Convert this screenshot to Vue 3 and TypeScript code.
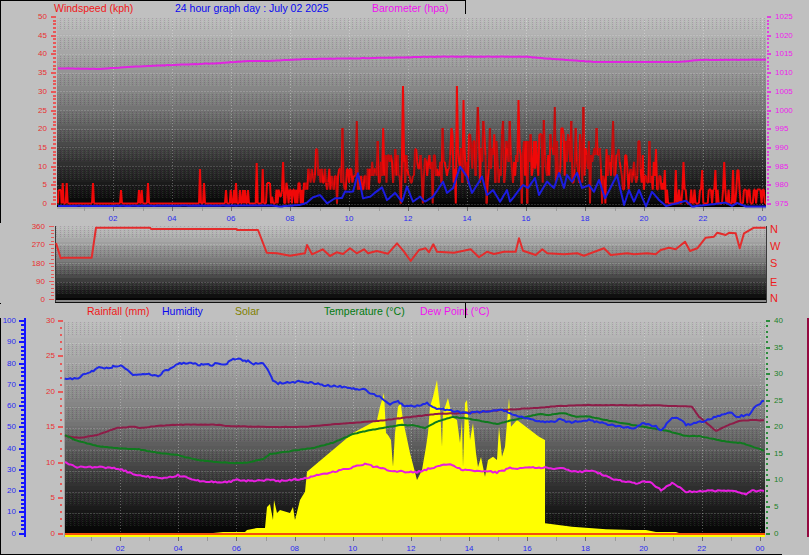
<script setup lang="ts">
type Pt = [number, number]
interface Box { x: number; y: number; w: number; h: number; fill: string }
interface Label { x: number; y: number; text: string; fill: string; anchor: string; size: number }
interface Stroke { d: string; color: string; width: number }
interface Panel {
  name: string
  legendClass: string
  legends: { text: string; cls: string }[]
  top: number
  height: number
  bands: Box[]
  dither: Box[]
  grid: Box[]
  area: string
  under: Stroke[]
  marks: Box[]
  labels: Label[]
}

function rng(seed: number) {
  let s = seed
  return () => {
    s = (s * 1664525 + 1013904223) % 4294967296
    return s / 4294967296
  }
}

const stops: Pt[] = [[0, 0xbc], [0.2, 0xa2], [0.45, 0x78], [0.6, 0x56], [0.75, 0x32], [0.9, 0x14], [1, 0x00]]
function grayAt(t: number): string {
  for (let i = 1; i < stops.length; i++) {
    if (t <= stops[i][0]) {
      const f = (t - stops[i - 1][0]) / (stops[i][0] - stops[i - 1][0])
      const v = Math.round(stops[i - 1][1] + f * (stops[i][1] - stops[i - 1][1]))
      return `rgb(${v},${v},${v})`
    }
  }
  return '#000'
}
function bands(x0: number, x1: number, y0: number, y1: number): Box[] {
  const out: Box[] = []
  for (let y = y0; y < y1; y += 4) {
    out.push({ x: x0, y, w: x1 - x0, h: Math.min(4, y1 - y), fill: grayAt((y - y0) / (y1 - y0)) })
  }
  return out
}
function dither(x0: number, x1: number, start: number, end: number, step: number): Box[] {
  const out: Box[] = []
  for (let y = start; y < end - 3; y += step) {
    out.push({ x: x0, y: Math.round(y), w: x1 - x0, h: Math.round(Math.min(step * 0.62, end - y)), fill: 'url(#dots)' })
  }
  return out
}
function hLines(x0: number, x1: number, ys: number[]): Box[] {
  return ys.map((y) => ({ x: x0, y: Math.round(y), w: x1 - x0, h: 1, fill: 'url(#dashH)' }))
}
function vLines(xs: number[], y0: number, y1: number): Box[] {
  return xs.map((x) => ({ x: Math.round(x), y: y0, w: 1, h: y1 - y0, fill: 'url(#dashV)' }))
}
function line(pts: Pt[]): string {
  return pts.map((p, i) => `${i ? 'L' : 'M'}${p[0].toFixed(1)} ${p[1].toFixed(1)}`).join('')
}
function noisy(pts: Pt[], amp: number, seed: number): string {
  const r = rng(seed)
  const out: Pt[] = []
  for (let i = 1; i < pts.length; i++) {
    const [ax, ay] = pts[i - 1]
    const [bx, by] = pts[i]
    const n = Math.max(1, Math.round((bx - ax) / 2))
    for (let k = 0; k < n; k++) {
      const f = k / n
      out.push([ax + (bx - ax) * f, ay + (by - ay) * f + (r() - 0.5) * amp])
    }
  }
  out.push(pts[pts.length - 1])
  return line(out)
}
function ticks(x: number, majorW: number, minorW: number, top: number, bottom: number, n: number, every: number, fill: string, h = 1): Box[] {
  const out: Box[] = []
  for (let i = 0; i <= n; i++) {
    const major = i % every === 0
    const y = top + ((bottom - top) * i) / n
    out.push({ x, y: Math.round(y - 0.5), w: major ? majorW : minorW, h, fill })
  }
  return out
}
function yLabels(x: number, top: number, bottom: number, values: string[], fill: string, anchor: string): Label[] {
  return values.map((text, i) => ({
    x,
    y: top + ((bottom - top) * i) / (values.length - 1),
    text,
    fill,
    anchor,
    size: 8
  }))
}
const hours = ['02', '04', '06', '08', '10', '12', '14', '16', '18', '20', '22', '00']
function xLabels(x0: number, per: number, y: number): Label[] {
  return hours.map((text, i) => ({ x: x0 + per * (i + 1) * 2, y, text, fill: '#2a2af0', anchor: 'middle', size: 8 }))
}
function xTicks(x0: number, per: number, y: number): Box[] {
  const out: Box[] = []
  for (let h = 1; h <= 24; h++) {
    out.push({ x: Math.round(x0 + per * h), y, w: 1, h: 4, fill: h % 2 ? '#9a9a9a' : '#6c6c6c' })
  }
  return out
}

/* ---------- wind panel ---------- */
const W_BASE = 203.5
const W_STEP = 6.93
const spikes: Pt[] = [
  [62.7, 183], [66.7, 183], [93, 183], [121, 190], [139, 190], [141.7, 190], [148, 183], [200, 169],
  [204, 183], [226, 190], [230.7, 190], [234, 190], [236, 183], [240, 190], [243, 190], [245, 190],
  [248, 190], [256.7, 163], [262.7, 169]
]
const peaks: Pt[] = [
  [402.7, 86], [456.7, 86], [464, 100], [478, 107], [519, 100], [342.7, 128], [356.7, 121], [383, 128],
  [378, 141], [316.7, 149], [282.7, 162], [483, 121], [503, 121], [510, 121], [451.7, 128], [442.7, 128],
  [490, 128], [473, 141], [415.7, 149], [425, 158], [395, 149], [555, 107], [583, 107], [544, 120],
  [562, 128], [571, 121], [576, 128], [613, 121], [597, 128], [607, 149], [619, 149], [639, 141],
  [649, 141], [656, 149], [665, 170], [676, 170], [684, 162], [702, 170], [715, 170], [724, 162],
  [733, 170], [738, 170], [746, 190]
]
function windPaths(): Stroke[] {
  const r = rng(77)
  const pts: Pt[] = [[58, W_BASE], [58.5, 190], [61, 190], [61.5, W_BASE]]
  for (const [x, y] of spikes) pts.push([x - 1, W_BASE], [x, y], [x + 1, W_BASE])
  pts.push([266, W_BASE], [267, 183], [270, 183])
  for (let x = 271; x < 766; x += 1.1) {
    let low = 2
    let high = 5
    let zero = 0.035
    if (x < 305) { low = 0; high = 3; zero = 0.3 }
    else if (x < 370) { low = 2; high = 5 }
    else if (x < 450) { low = 3; high = 7 }
    else if (x < 600) { low = 3; high = 10 }
    else if (x < 665) { low = 2; high = 7; zero = 0.1 }
    else { low = 0; high = 2; zero = 0.35 }
    let q = low + Math.floor(Math.pow(r(), 1.15) * (high - low + 1))
    if (r() < zero) q = 0
    if (x >= 665 && q === 1) q = 2
    let y = W_BASE - q * W_STEP
    for (const [px, py] of peaks) if (Math.abs(px - x) < 0.6) y = py
    pts.push([x, y])
  }
  pts.sort((a, b) => a[0] - b[0])
  pts.push([766, W_BASE])
  let bright = ''
  let dark = ''
  for (let i = 1; i < pts.length; i++) {
    const seg = `M${pts[i - 1][0].toFixed(1)} ${pts[i - 1][1].toFixed(1)}L${pts[i][0].toFixed(1)} ${pts[i][1].toFixed(1)}`
    if (pts[i][0] > 300 && pts[i][0] < 660 && r() < 0.4) dark += seg
    else bright += seg
  }
  return [
    { d: bright, color: '#f00808', width: 2 },
    { d: dark, color: '#c40c0c', width: 2 }
  ]
}
const windBlue: Pt[] = [
  [58, 206], [270, 205.5], [280, 206.5], [300, 205], [307, 202.7], [313, 197.3], [320, 195], [327, 203.3], [335, 198.3],
  [342, 198], [345, 191.7], [353, 191.7], [358, 173.3], [363, 198.3], [370, 196.7], [382, 187.3], [387, 200],
  [395, 193], [402, 201.7], [407, 186.7], [413, 201.7], [420, 196.7], [425, 201.7], [433, 196.7], [443, 181.7],
  [447, 193], [453, 188], [460, 166.7], [467, 176.7], [472, 193], [482, 176.7], [487, 195], [493, 190],
  [500, 201.7], [507, 190], [510, 201.7], [523, 185], [528, 188], [535, 178], [539, 195], [547, 181.7],
  [554, 188], [559, 173], [564, 188], [567, 175], [572, 181.7], [577, 173], [582, 188], [589, 185], [594, 191.7],
  [599, 180], [605, 198.3], [611, 186.7], [617, 175], [624, 205], [629, 190], [634, 201.7], [639, 190],
  [646, 206.5], [652, 191.7], [659, 200], [666, 206], [686, 200.7], [692, 206.5], [726, 202.7], [732, 206],
  [737, 203], [746, 206.5], [766, 206.5]
]
const baro: Pt[] = [
  [58, 68.3], [100, 69], [113, 68], [133, 66.7], [173, 65], [217, 63.3], [248, 61], [270, 61], [303, 59],
  [360, 58.3], [437, 56.7], [527, 56.7], [540, 58], [572, 60.3], [596, 62], [679, 62], [699, 60], [766, 59.7]
]
const windYs = Array.from({ length: 10 }, (_, i) => 35.2 + 18.7 * i)
const windHour = (h: number) => 54 + 29.5 * h
const windPanel: Panel = {
  name: 'wind',
  legendClass: 'legend-wind',
  legends: [
    { text: 'Windspeed (kph)', cls: 'red' },
    { text: '24 hour graph day : July 02 2025', cls: 'blue' },
    { text: 'Barometer (hpa)', cls: 'magenta' }
  ],
  top: 14,
  height: 208,
  bands: bands(57, 766, 18, 207),
  dither: dither(57, 766, 18, 207, 18.7),
  grid: [...hLines(57, 766, windYs), ...vLines(hours.map((_, i) => windHour((i + 1) * 2)), 18, 207)],
  area: '',
  under: [
    ...windPaths(),
    { d: noisy(windBlue, 0.3, 5), color: '#1c1ce0', width: 2 },
    { d: noisy(baro, 0.3, 6), color: '#e024e0', width: 2 }
  ],
  marks: [
    { x: 0, y: 14, w: 1, h: 209, fill: '#000' },
    { x: 57, y: 207, w: 709, h: 2, fill: '#a8a8a8' },
    ...ticks(51, 5, 3, 16.5, 203.5, 50, 5, '#e85858', 2).map((b) => (b.w === 3 ? { ...b, x: 53 } : b)),
    ...ticks(767, 4, 2, 16.5, 203.5, 50, 5, '#e040e0', 2),
    ...xTicks(54, 29.5, 207)
  ],
  labels: [
    ...yLabels(47, 16.5, 203.5, ['50', '45', '40', '35', '30', '25', '20', '15', '10', '5', '0'], '#e83030', 'end'),
    ...yLabels(775, 16.5, 203.5, ['1025', '1020', '1015', '1010', '1005', '1000', '995', '990', '985', '980', '975'], '#ee20ee', 'start'),
    ...xLabels(54, 29.5, 218)
  ]
}

/* ---------- direction panel ---------- */
const dir: Pt[] = [
  [56, 243], [60.7, 258.3], [63, 257.7], [91.7, 257.7], [96, 227.7], [150, 227.7], [151, 229], [236.7, 229], [237, 230],
  [258, 230], [266.7, 252.7], [277, 253.3], [290, 255.7], [305, 253.3], [307, 245], [312, 254.3], [322.7, 249.3],
  [330, 256], [336.7, 252.3], [343, 254], [350, 248.3], [356.7, 253.3], [364, 249.3], [368, 253.3], [376.7, 251],
  [388, 253.7], [397, 243.3], [404, 251.7], [410.7, 261], [419, 250], [425.7, 248.3], [429, 252.3], [433.3, 244.3],
  [437, 251.7], [454, 252.7], [470.7, 249.3], [479, 257.3], [487, 251.7], [494, 254], [504, 251.7], [515.7, 251.7],
  [519, 238.3], [523, 250.7], [535.7, 255], [542.3, 249.3], [547.3, 253.3], [564, 254.3], [577.3, 253.3], [584, 255.7],
  [604, 248.3], [610.7, 255], [627.3, 253.3], [634, 254.3], [647.3, 253.3], [655.7, 254.3], [660.7, 250], [669, 247.7],
  [675.7, 249.3], [685, 241.7], [690, 251], [697.3, 248.3], [705.7, 237.7], [714, 236.7], [717.3, 232.7], [725.7, 235],
  [729, 232.7], [735.7, 233.3], [739.7, 248.3], [744, 233.3], [754, 227.7], [765.7, 227.7]
]
const dirPanel: Panel = {
  name: 'dir',
  legendClass: '',
  legends: [],
  top: 222,
  height: 82,
  bands: bands(56, 767, 226, 300),
  dither: dither(56, 767, 226, 300, 18.7),
  grid: [...hLines(56, 767, [244.3, 263, 282])],
  area: '',
  under: [{ d: line(dir), color: '#e42c2c', width: 2 }],
  marks: [
    { x: 55, y: 226, w: 1, h: 77, fill: '#3a3a3a' },
    { x: 56, y: 300, w: 711, h: 2, fill: '#8c8c8c' },
    { x: 55, y: 302, w: 712, h: 1, fill: '#111' },
    { x: 766, y: 226, w: 1, h: 77, fill: '#3a3a3a' },
    { x: 0, y: 222, w: 1, h: 1, fill: '#000' },
    { x: 0, y: 303, w: 1, h: 1, fill: '#000' },
    ...ticks(49, 5, 3, 226.7, 299.5, 20, 5, '#e85858', 1).map((b) => (b.w === 3 ? { ...b, x: 51 } : b))
  ],
  labels: [
    ...yLabels(45, 226.7, 299.5, ['360', '270', '180', '90', '0'], '#e83030', 'end'),
    ...['N', 'W', 'S', 'E', 'N'].map((text, i) => ({
      x: 770,
      y: [229, 246, 263, 282, 298][i],
      text,
      fill: '#ee1c1c',
      anchor: 'start',
      size: 11
    }))
  ]
}

/* ---------- weather panel ---------- */
const humidity: Pt[] = [
  [64.7, 379], [78, 378.7], [83, 375], [90, 373], [97, 368], [112, 368], [113, 366], [123, 366], [133, 374.7], [147, 374],
  [160, 376], [163, 371.7], [172, 368], [178, 363.7], [195, 363.7], [198, 365.7], [203, 364], [212, 365.7], [215, 363.7],
  [227, 363.7], [230, 361], [233, 359], [240, 359], [243, 361], [248, 361.3], [252, 363.7], [263, 363.7], [267, 368],
  [270, 374], [273, 380], [278, 384], [280, 382.7], [293, 382.7], [297, 381], [310, 382.7], [330, 386], [350, 387.3],
  [357, 390], [363, 388], [370, 393], [380, 397], [390, 404], [398, 401.7], [405, 406.7], [417, 406], [427, 402.7],
  [433, 408], [443, 409], [457, 411.7], [470, 413], [483, 411.7], [500, 409], [510, 413], [520, 416.7], [539, 420.7],
  [549, 422.7], [562, 419], [566, 422.7], [589, 420], [602, 423], [616, 426], [636, 428], [642, 423], [656, 426],
  [661, 430.7], [672, 417], [681, 420], [686, 425], [706, 420.7], [716, 417], [732, 412.7], [736, 416.7], [749, 415],
  [756, 406], [764, 400.7]
]
const crimson: Pt[] = [
  [65, 436], [80, 438], [97, 435], [117, 428], [133, 426.7], [140, 428], [157, 426], [177, 424.7], [217, 424.7], [227, 426],
  [270, 427], [303, 427], [337, 424], [377, 421], [410, 417], [437, 414], [470, 412.7], [503, 410], [539, 407.7],
  [559, 406], [586, 405], [656, 405.3], [692, 406.7], [699, 416.7], [716, 431], [726, 426], [739, 421], [752, 420], [764, 420.3]
]
const green: Pt[] = [
  [65, 435.3], [75, 440], [97, 446], [117, 448.3], [137, 449], [153, 452], [177, 455], [197, 460], [217, 462], [233, 463],
  [248, 462.7], [263, 459], [270, 454], [293, 450.7], [313, 448], [333, 442.7], [353, 434], [367, 430.7], [383, 428],
  [400, 425], [413, 425.3], [425, 428], [437, 421.7], [453, 416.7], [470, 419], [497, 424], [510, 420.7], [527, 416.7],
  [539, 414], [547, 415], [564, 413], [576, 417], [586, 416], [609, 420.7], [639, 426], [666, 430.7], [686, 436],
  [699, 436], [726, 441.7], [742, 443], [764, 450.7]
]
const dew: Pt[] = [
  [65, 462.3], [75, 467], [100, 467], [120, 469], [133, 474], [150, 477], [160, 478.7], [178, 475.3], [200, 481], [227, 482.3],
  [237, 480], [250, 481], [270, 480], [280, 481], [303, 478.7], [337, 471], [365, 464.3], [393, 471], [417, 472.3],
  [430, 468.3], [450, 464], [463, 470], [483, 470.7], [497, 472.3], [510, 468.3], [539, 467.7], [562, 468.3], [576, 472],
  [592, 470.7], [616, 480], [636, 483.3], [644, 481], [652, 483.3], [661, 490], [672, 483.3], [686, 491.7], [712, 490.7],
  [732, 490.7], [746, 494], [752, 490.7], [764, 491]
]
const solar: Pt[] = [
  [208, 535], [213, 533], [223, 532], [245, 532], [247, 530], [257, 528], [265, 528], [267, 507], [270, 504], [273, 520], [274, 500],
  [277, 513], [280, 510], [290, 513], [293, 507], [295, 520], [300, 500], [305, 491.7], [307, 471.7], [353, 433], [377, 420],
  [380, 406.7], [384, 393], [386, 433], [388, 435], [391, 440], [393, 466.7], [395, 433], [398, 406.7], [400.7, 403], [403, 420],
  [410, 453], [417, 480], [422, 470], [426, 446.7], [428, 433], [430, 406.7], [433, 396.7], [437, 380], [438, 390], [440, 406.7],
  [442, 446.7], [443, 413], [448, 398], [452, 416.7], [457, 420], [460, 443], [462, 420], [463, 466.7], [465, 403], [467, 400],
  [470, 440], [473, 423], [476, 453], [478, 467], [481, 457], [485, 476.7], [488, 460], [493, 456.7], [497, 460], [499, 426.7],
  [502, 456.7], [505, 446.7], [509, 398], [511, 426.7], [517, 420], [539, 436.7], [545, 440], [545, 523.3], [572, 526.7],
  [606, 529.3], [632, 530], [646, 530], [656, 532], [676, 532], [682, 534], [700, 535]
]
const hour3 = (h: number) => 62 + 29.08 * h
const weatherPanel: Panel = {
  name: 'weather',
  legendClass: 'legend-rain',
  legends: [
    { text: 'Rainfall (mm)', cls: 'red' },
    { text: 'Humidity', cls: 'blue' },
    { text: 'Solar', cls: 'olive' },
    { text: 'Temperature (°C)', cls: 'green' },
    { text: 'Dew Point (°C)', cls: 'magenta' }
  ],
  top: 318,
  height: 237,
  bands: bands(64, 765, 322, 535),
  dither: dither(64, 765, 322, 535, 21.2),
  grid: [
    ...hLines(64, 765, [342.5, 363, 385, 406.8, 428, 449.5, 471, 492, 513]),
    ...vLines(hours.map((_, i) => hour3((i + 1) * 2)), 322, 537)
  ],
  area: `${line(solar)}Z`,
  under: [
    { d: noisy(crimson, 0.4, 11), color: '#8e1c48', width: 2 },
    { d: noisy(green, 0.5, 12), color: '#0f7a1e', width: 2 },
    { d: noisy(dew, 1.6, 13), color: '#e81ee0', width: 2 },
    { d: noisy(humidity, 2, 14), color: '#1e28e6', width: 2 }
  ],
  marks: [
    { x: 0, y: 318, w: 1, h: 237, fill: '#000' },
    { x: 64, y: 533, w: 701, h: 2, fill: '#f4500a' },
    { x: 64, y: 535, w: 701, h: 2, fill: '#ffff00' },
    { x: 0, y: 554, w: 782, h: 1, fill: '#000' },
    { x: 24, y: 318, w: 2, h: 219, fill: '#1414ff' },
    { x: 807, y: 318, w: 2, h: 219, fill: '#940a40' },
    { x: 64, y: 322, w: 1, h: 215, fill: '#a0a0a0' },
    ...ticks(19, 5, 3, 320.5, 533, 50, 5, '#1414ff', 2).map((b) => (b.w === 3 ? { ...b, x: 21 } : b)),
    ...ticks(58, 5, 2, 320.5, 533, 30, 5, '#e85858', 2).map((b) => (b.w === 2 ? { ...b, x: 60 } : b)),
    ...ticks(766, 4, 2, 320.5, 533, 40, 5, '#2c8c3c', 2),
    ...xTicks(62, 29.08, 537)
  ],
  labels: [
    ...yLabels(16, 320.5, 533, ['100', '90', '80', '70', '60', '50', '40', '30', '20', '10', '0'], '#2a2af0', 'end'),
    ...yLabels(55, 320.5, 533, ['30', '25', '20', '15', '10', '5', '0'], '#e83030', 'end'),
    ...yLabels(774, 320.5, 533, ['40', '35', '30', '25', '20', '15', '10', '5', '0'], '#1c8028', 'start'),
    ...xLabels(62, 29.08, 548)
  ]
}
const panels: Panel[] = [windPanel, dirPanel, weatherPanel]
</script>

<template>
  <main class="page">
    <svg class="defs" width="0" height="0" aria-hidden="true">
      <defs>
        <pattern id="dots" width="4" height="2" patternUnits="userSpaceOnUse">
          <rect x="0" y="0" width="1" height="1" fill="rgba(0,0,0,0.13)" />
          <rect x="2" y="1" width="1" height="1" fill="rgba(255,255,255,0.08)" />
          <rect x="1" y="0" width="1" height="1" fill="rgba(255,60,255,0.05)" />
          <rect x="3" y="1" width="1" height="1" fill="rgba(60,255,60,0.05)" />
        </pattern>
        <pattern id="dashH" width="3" height="1" patternUnits="userSpaceOnUse">
          <rect width="2" height="1" fill="rgba(255,255,255,0.16)" />
        </pattern>
        <pattern id="dashV" width="1" height="3" patternUnits="userSpaceOnUse">
          <rect width="1" height="1" fill="rgba(255,255,255,0.3)" />
        </pattern>
      </defs>
    </svg>
    <section v-for="p in panels" :key="p.name" class="panel">
      <header v-if="p.legends.length" class="legend" :class="p.legendClass">
        <span v-for="l in p.legends" :key="l.text" :class="l.cls">{{ l.text }}</span>
        <i v-if="p.name === 'weather'" class="divider"></i>
      </header>
      <svg class="chart" width="809" :height="p.height" :viewBox="`0 ${p.top} 809 ${p.height}`">
        <g shape-rendering="crispEdges">
          <rect v-for="b in p.bands" :key="`b${b.y}`" :x="b.x" :y="b.y" :width="b.w" :height="b.h" :fill="b.fill" />
          <rect v-for="b in p.dither" :key="`d${b.y}`" :x="b.x" :y="b.y" :width="b.w" :height="b.h" :fill="b.fill" />
          <rect v-for="(b, i) in p.grid" :key="`g${i}`" :x="b.x" :y="b.y" :width="b.w" :height="b.h" :fill="b.fill" />
        </g>
        <path v-if="p.area" :d="p.area" fill="#ffff00" />
        <g shape-rendering="crispEdges">
          <rect v-for="(b, i) in p.marks" :key="`m${i}`" :x="b.x" :y="b.y" :width="b.w" :height="b.h" :fill="b.fill" />
        </g>
        <path
          v-for="s in p.under"
          :key="s.color"
          :d="s.d"
          fill="none"
          :stroke="s.color"
          :stroke-width="s.width"
          stroke-linejoin="round"
        />
        <text
          v-for="t in p.labels"
          :key="`${t.text}${t.x}${t.y}`"
          :x="t.x"
          :y="t.y"
          :fill="t.fill"
          :font-size="t.size"
          :text-anchor="t.anchor"
          dominant-baseline="central"
        >{{ t.text }}</text>
      </svg>
    </section>
  </main>
</template>

<style>
html,
body {
  margin: 0;
  background: #c0c0c0;
}
</style>

<style scoped>
.page {
  position: relative;
  display: flex;
  flex-direction: column;
  width: 809px;
  height: 555px;
  overflow: hidden;
  background: #c0c0c0;
  font-family: "Liberation Sans", Arial, sans-serif;
}
.defs {
  position: absolute;
}
.panel {
  display: flex;
  flex-direction: column;
}
.chart {
  display: block;
  overflow: visible;
  font-family: "Liberation Sans", Arial, sans-serif;
}
.legend {
  position: relative;
  display: grid;
  box-sizing: border-box;
  height: 14px;
  align-items: center;
  font-size: 10.5px;
  line-height: 14px;
  white-space: nowrap;
}
.legend-wind {
  grid-template-columns: 121px 197px auto;
  justify-content: start;
  width: 466px;
  padding-left: 53px;
  border-top: 1px solid #000;
  border-left: 1px solid #000;
  border-right: 1px solid #000;
}
.legend-rain {
  grid-template-columns: 75px 73px 89px 96px auto;
  justify-content: start;
  padding-left: 87px;
}
.divider {
  position: absolute;
  left: 465px;
  top: -1px;
  width: 1px;
  height: 15px;
  background: #000;
}
.red {
  color: #f01818;
}
.blue {
  color: #0808f0;
}
.magenta {
  color: #f010f0;
}
.olive {
  color: #808000;
}
.green {
  color: #007a10;
}
</style>
